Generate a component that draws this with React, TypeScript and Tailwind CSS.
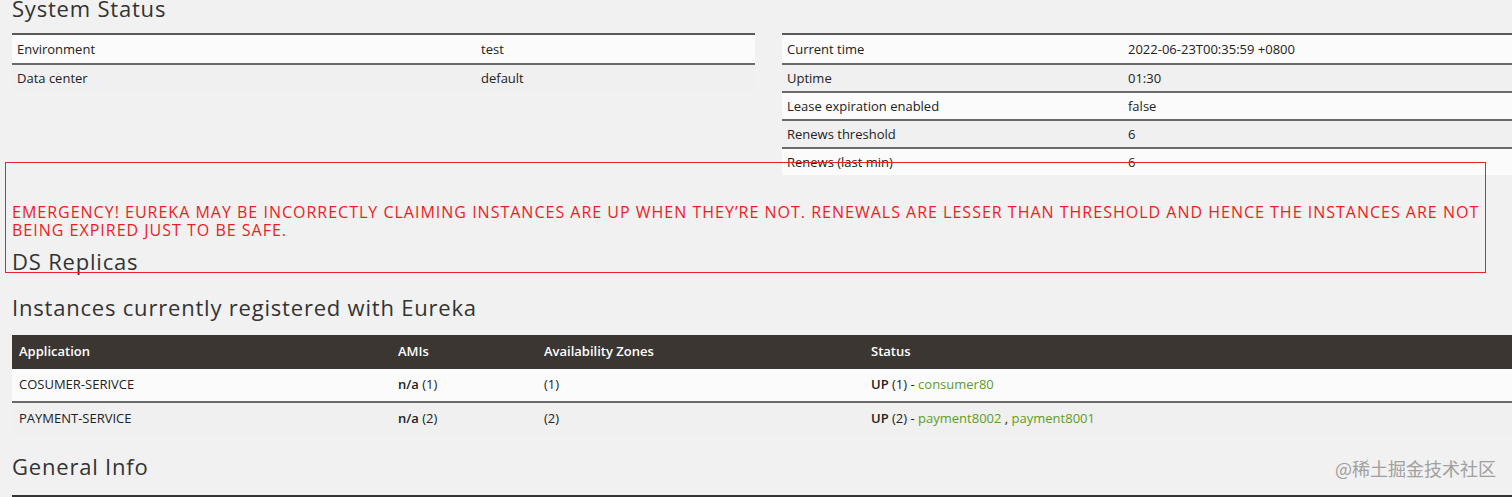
import React from "react";

const left = [
  ["Environment", "test"],
  ["Data center", "default"],
];
const right = [
  ["Current time", "2022-06-23T00:35:59 +0800"],
  ["Uptime", "01:30"],
  ["Lease expiration enabled", "false"],
  ["Renews threshold", "6"],
  ["Renews (last min)", "6"],
];

function KVTable({ rows, valueCol }: { rows: string[][]; valueCol: string }) {
  return (
    <div className="border-t-2 border-[#5a5a5a]">
      {rows.map((r, i) => (
        <div
          key={i}
          className={`grid ${valueCol} h-[28px] items-center ${i > 0 ? "border-t-2 border-[#6a6a6a]" : ""} ${i % 2 === 0 ? "bg-[#fbfbfb]" : "bg-[#f0f0f0]"}`}
        >
          <div className="pl-[5px] leading-[26px]">{r[0]}</div>
          <div className="leading-[26px]">{r[1]}</div>
        </div>
      ))}
    </div>
  );
}

export default function App() {
  return (
    <div
      className="relative w-[1512px] h-[497px] overflow-hidden bg-[#f1f1f1] text-[#222] text-[13px]"
      style={{ fontFamily: '"Open Sans", "Noto Sans", sans-serif' }}
    >
      <div className="w-[1513px] pl-[12px]">
        <h2 className="text-[22px] leading-[28px] -mt-[6px] h-[28px] text-[#333] font-normal tracking-[0.8px]">System Status</h2>
        <div className="grid grid-cols-[743px_1fr] gap-[27px] mt-[11px]">
          <KVTable rows={left} valueCol="grid-cols-[469px_1fr]" />
          <KVTable rows={right} valueCol="grid-cols-[346px_1fr]" />
        </div>
        <div className="mt-[28px] text-[#ee1c25] text-[16px] leading-[18px] uppercase font-medium tracking-[1px] pr-[8px]">
          EMERGENCY! EUREKA MAY BE INCORRECTLY CLAIMING INSTANCES ARE UP WHEN THEY’RE NOT. RENEWALS ARE LESSER THAN THRESHOLD AND HENCE THE INSTANCES ARE NOT BEING EXPIRED JUST TO BE SAFE.
        </div>
        <h2 className="text-[22px] leading-[28px] mt-[8px] text-[#333] font-normal tracking-[0.8px]">DS Replicas</h2>
        <h2 className="text-[22px] leading-[28px] mt-[18px] text-[#333] font-normal tracking-[0.8px]">Instances currently registered with Eureka</h2>
        <div className="mt-[14px]">
          <div className="grid grid-cols-[386px_146px_327px_1fr] h-[34px] items-center bg-[#3b3631] text-white font-semibold">
            <div className="pl-[7px]">Application</div>
            <div>AMIs</div>
            <div>Availability Zones</div>
            <div>Status</div>
          </div>
          <div className="grid grid-cols-[386px_146px_327px_1fr] h-[34px] items-center bg-[#fbfbfb] border-b-2 border-[#6a6a6a]">
            <div className="pl-[7px]">COSUMER-SERIVCE</div>
            <div><b className="font-semibold">n/a</b> (1)</div>
            <div>(1)</div>
            <div>
              <b className="font-semibold">UP</b> (1) - <span className="text-[#5e9c25]">consumer80</span>
            </div>
          </div>
          <div className="grid grid-cols-[386px_146px_327px_1fr] h-[32px] items-center bg-[#f0f0f0]">
            <div className="pl-[7px]">PAYMENT-SERVICE</div>
            <div><b className="font-semibold">n/a</b> (2)</div>
            <div>(2)</div>
            <div>
              <b className="font-semibold">UP</b> (2) - <span className="text-[#5e9c25]">payment8002</span> ,{" "}
              <span className="text-[#5e9c25]">payment8001</span>
            </div>
          </div>
        </div>
        <h2 className="text-[22px] leading-[28px] mt-[17px] text-[#333] font-normal tracking-[0.8px]">General Info</h2>
        <div className="mt-[15px] border-t-2 border-[#333]" />
      </div>
      <div className="absolute left-[5px] top-[162px] w-[1481px] h-[111px] border-[1.5px] border-[#e8222b] pointer-events-none" />
      <div
        className="absolute right-[16px] top-[454px] text-[18px] leading-[28px] text-[#a0a0a0]"
        style={{ fontFamily: '"Noto Sans CJK SC", sans-serif' }}
      >
        @稀土掘金技术社区
      </div>
    </div>
  );
}
